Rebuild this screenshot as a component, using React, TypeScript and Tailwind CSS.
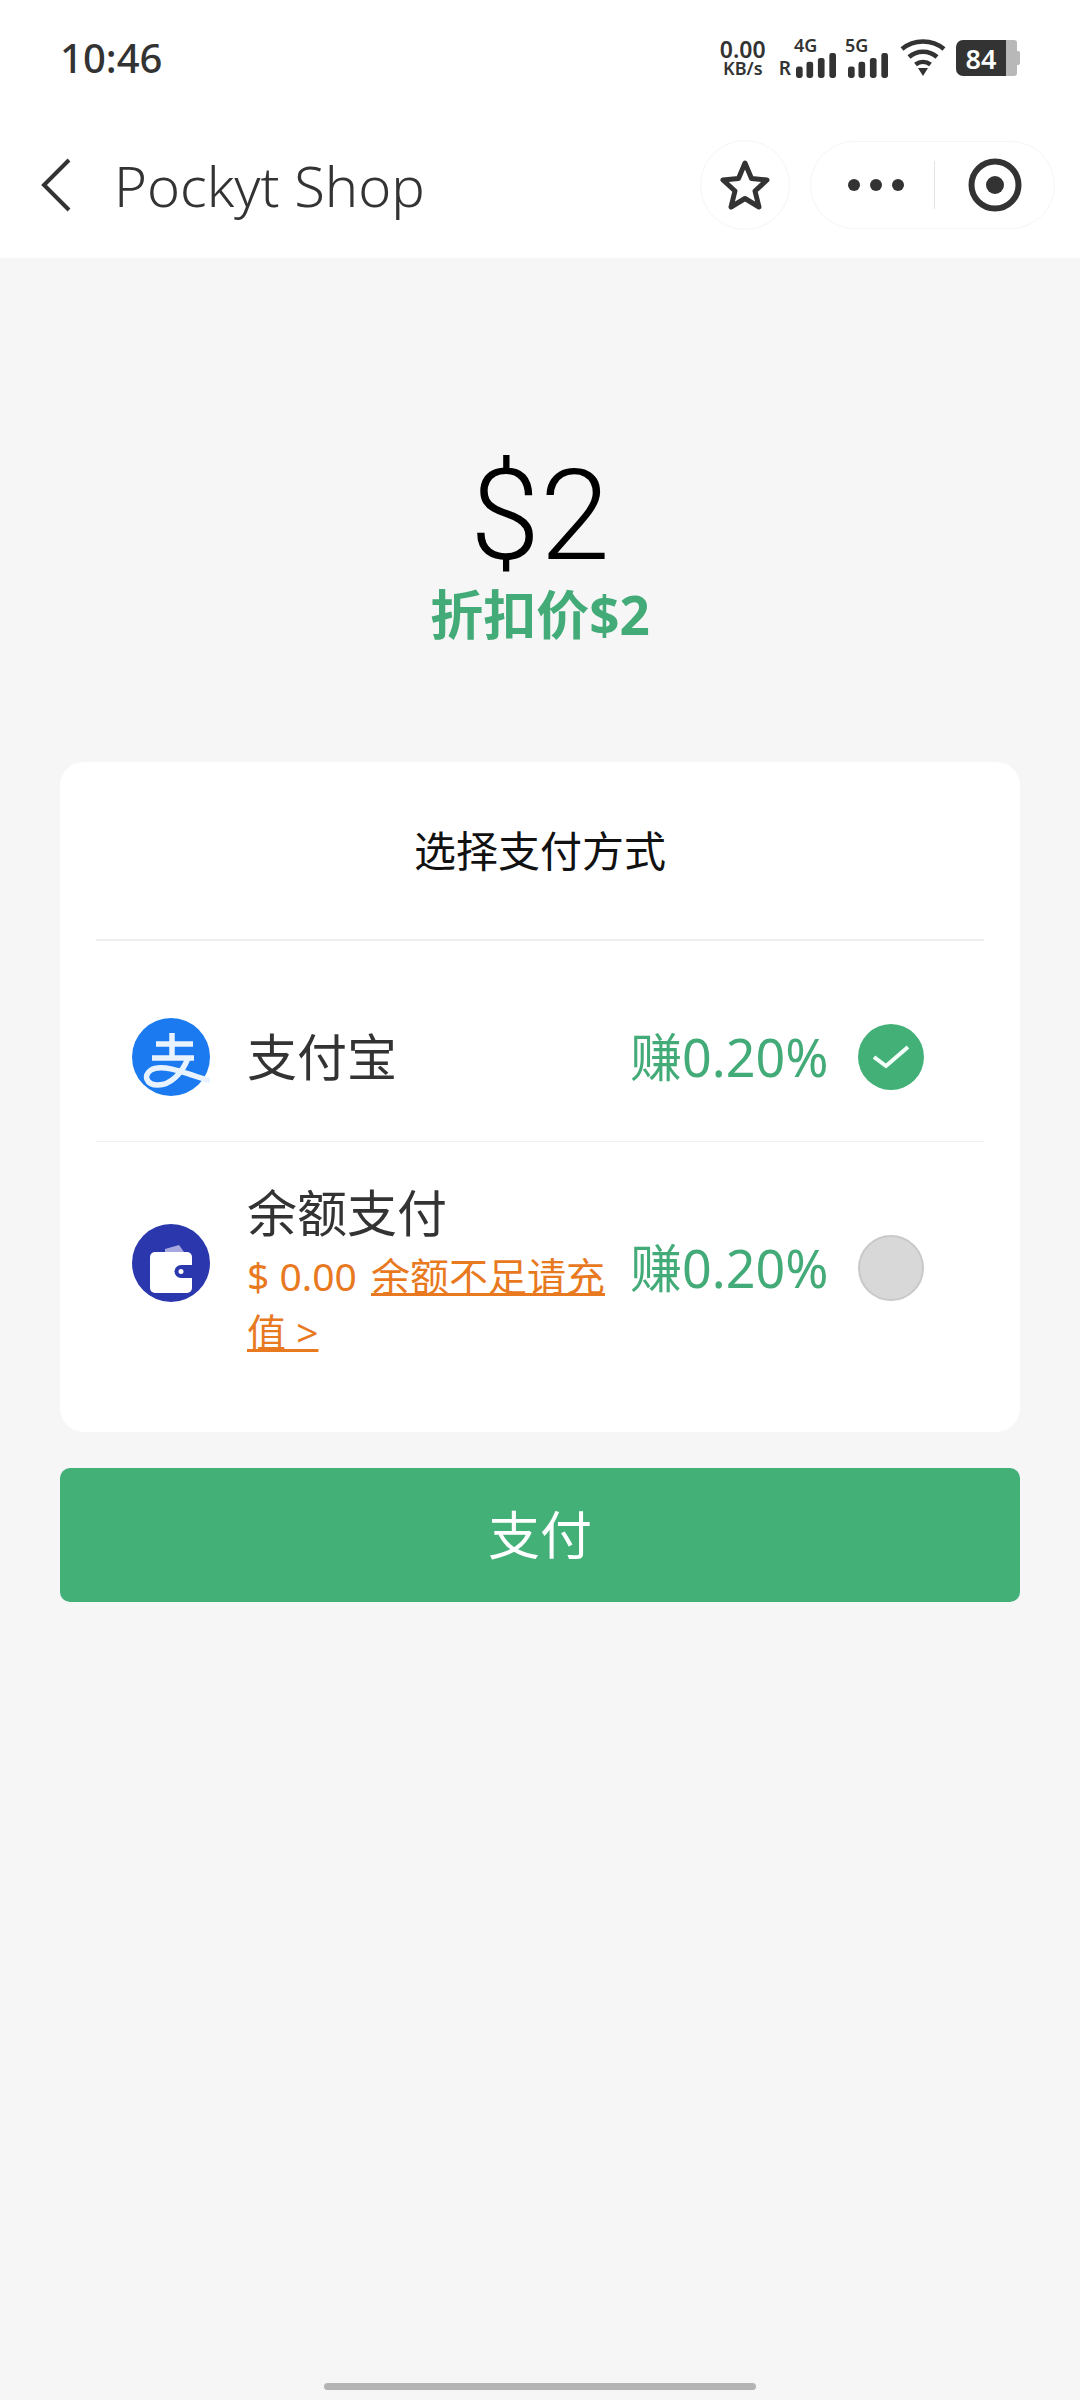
const font = 'font-["Noto_Sans","Noto_Sans_CJK_SC",sans-serif]';

function SignalBars() {
  return (
    <svg width="40" height="25" viewBox="0 0 42 26" fill="#333">
      <rect x="0" y="14" width="7" height="12" rx="2.5" />
      <rect x="11" y="9" width="7" height="17" rx="2.5" />
      <rect x="23" y="5" width="7" height="21" rx="2.5" />
      <rect x="35" y="0" width="7" height="26" rx="2.5" />
    </svg>
  );
}

function Wifi() {
  return (
    <svg width="46" height="38" viewBox="0 0 46 38" fill="none" stroke="#333" strokeWidth="4.5">
      <path d="M2 10C14 0 32 0 44 10" />
      <path d="M9 18C17 11 29 11 37 18" />
      <path d="M15.5 25.5C20 22 26 22 30.5 25.5" />
      <path d="M18 29H28L23 37Z" fill="#333" stroke="none" />
    </svg>
  );
}

function StatusBar() {
  return (
    <div className="h-[84px] flex items-center justify-between pl-[60px] pr-[60px] pt-[32px] bg-white">
      <span className="text-[40px] leading-[40px] font-medium text-[#333] font-['Noto_Sans',sans-serif]">10:46</span>
      <div className="flex items-center h-[40px] text-[#333] font-['Noto_Sans',sans-serif] font-semibold">
        <div className="flex flex-col items-center w-[46px] mr-[13px]">
          <span className="text-[23px] leading-[20px]">0.00</span>
          <span className="text-[18px] leading-[18px]">KB/s</span>
        </div>
        <div className="flex items-end mr-[12px] mt-[14px]">
          <span className="text-[19px] leading-[20px] mr-[5px]">R</span>
          <div className="relative">
            <span className="absolute top-[-16px] left-[-2px] text-[18px] leading-[16px]">4G</span>
            <SignalBars />
          </div>
        </div>
        <div className="relative mr-[12px] mt-[14px]">
          <span className="absolute top-[-16px] left-[-3px] text-[18px] leading-[16px]">5G</span>
          <SignalBars />
        </div>
        <div className="mr-[10px]"><Wifi /></div>
        <div className="flex items-center h-[36px]">
          <div className="w-[50px] h-[36px] bg-[#333] rounded-l-[7px] flex items-center justify-center text-white text-[27px] leading-none">84</div>
          <div className="w-[11px] h-[36px] bg-[#b8b8b8] rounded-r-[3px]" />
          <div className="w-[3px] h-[14px] bg-[#b8b8b8] rounded-r-[2px]" />
        </div>
      </div>
    </div>
  );
}

function NavBar() {
  return (
    <div className="h-[174px] bg-white flex items-center pl-[41px] pr-[25px] pt-[28px]">
      <svg width="30" height="54" viewBox="0 0 30 54" fill="none" stroke="#333" strokeWidth="4">
        <path d="M28 2L3 27L28 52" />
      </svg>
      <span className="ml-[43px] text-[56px] leading-none text-[#333] font-light font-['Noto_Sans',sans-serif]">Pockyt Shop</span>
      <div className="ml-auto flex items-center gap-[20px]">
        <div className="w-[90px] h-[90px] ml-[2px] rounded-full border border-[#f5f5f5] flex items-center justify-center">
          <svg width="50" height="50" viewBox="0 0 50 50" fill="none" stroke="#333" strokeWidth="5" strokeLinejoin="round">
            <path d="M25 3L31.5 18.5L47 20L35 31L39 47L25 38.5L11 47L15 31L3 20L18.5 18.5Z" />
          </svg>
        </div>
        <div className="w-[245px] h-[88px] rounded-full border border-[#f5f5f5] flex items-center">
          <div className="w-[123px] flex justify-center gap-[10px] pl-[6px]">
            <span className="w-[12px] h-[12px] rounded-full bg-[#333]" />
            <span className="w-[12px] h-[12px] rounded-full bg-[#333]" />
            <span className="w-[12px] h-[12px] rounded-full bg-[#333]" />
          </div>
          <div className="w-px h-[48px] bg-[#e4e4e4]" />
          <div className="flex-1 flex justify-center">
            <svg width="54" height="54" viewBox="0 0 54 54">
              <circle cx="27" cy="27" r="23.5" fill="none" stroke="#333" strokeWidth="6" />
              <circle cx="27" cy="27" r="9" fill="#333" />
            </svg>
          </div>
        </div>
      </div>
    </div>
  );
}

function AlipayLogo() {
  return (
    <svg width="78" height="78" viewBox="0 0 78 78" className="shrink-0">
      <circle cx="39" cy="39" r="39" fill="#1b7af0" />
      <g fill="none" stroke="#e8f3ff" strokeWidth="5.5">
        <path d="M24 26H61" />
        <path d="M40 15V38" />
        <path d="M20 40H62" />
        <path d="M56 40C50 56 38 67 26 67C14 67 11 57 19 52C28 46 46 52 78 63" />
      </g>
    </svg>
  );
}

function WalletLogo() {
  return (
    <svg width="78" height="78" viewBox="0 0 78 78" className="shrink-0">
      <circle cx="39" cy="39" r="39" fill="#2b38ad" />
      <path d="M33 25L47 21L52 28H33Z" fill="#a8a8e0" />
      <rect x="18" y="28" width="42" height="41" rx="5" fill="#fff" />
      <path d="M60 41H49A6.5 6.5 0 0 0 49 54H60Z" fill="#2b38ad" />
      <circle cx="49" cy="47.5" r="2.5" fill="#fff" />
    </svg>
  );
}

function Earn() {
  return <span className="w-[198px] text-[52px] leading-none text-[#43ab78] font-normal whitespace-nowrap shrink-0">赚0.20%</span>;
}

export default function App() {
  return (
    <div className={`relative min-h-[2400px] bg-[#f6f6f6] ${font}`}>
      <StatusBar />
      <NavBar />
      <div className="flex flex-col items-center pt-[188px]">
        <div className="text-[126px] leading-[140px] text-black font-light font-['Roboto',sans-serif]">$2</div>
        <div className="text-[53px] leading-[62px] mt-[-2px] text-[#43ab78] font-bold">折扣价$2</div>
      </div>

      <div className="mx-[60px] mt-[116px] h-[670px] bg-white rounded-[24px] px-[36px]">
        <div className="h-[179px] flex items-center justify-center border-b-2 border-[#eeeeee] text-[42px] text-[#111]">
          选择支付方式
        </div>
        <div className="h-[201px] flex items-center pl-[36px] pr-[60px] pt-[32px] border-b border-[#f0f0f0]">
          <AlipayLogo />
          <span className="ml-[37px] text-[50px] leading-none text-[#333] flex-1">支付宝</span>
          <Earn />
          <span className="ml-[30px] w-[66px] h-[66px] rounded-full bg-[#43b078] flex items-center justify-center">
            <svg width="36" height="24" viewBox="0 0 36 24" fill="none" stroke="#f4fff9" strokeWidth="4">
              <path d="M1 12L13 21L35 2" />
            </svg>
          </span>
        </div>
        <div className="flex items-start pl-[36px] pr-[60px] pt-[41px]">
          <div className="mt-[41px]"><WalletLogo /></div>
          <div className="ml-[37px] w-[363px] shrink-0">
            <div className="text-[50px] leading-[60px] text-[#333]">余额支付</div>
            <div className="text-[39px] leading-[56px] mt-[5px] text-[#e8791f] font-normal">
              $ 0.00 <span className="underline ml-[4px]">余额不足请充值 &gt;</span>
            </div>
          </div>
          <div className="mt-[52px] ml-[20px] flex items-center">
            <Earn />
            <span className="ml-[30px] w-[66px] h-[66px] rounded-full bg-[#d8d8d8] border-2 border-[#c9c9c9]" />
          </div>
        </div>
      </div>

      <button className="block mx-[60px] mt-[36px] w-[960px] h-[134px] rounded-[10px] bg-[#43b078] text-white text-[52px]">
        支付
      </button>

      <div className="absolute bottom-[10px] left-[324px] w-[432px] h-[7px] rounded-full bg-[#b4b4b4]" />
    </div>
  );
}
